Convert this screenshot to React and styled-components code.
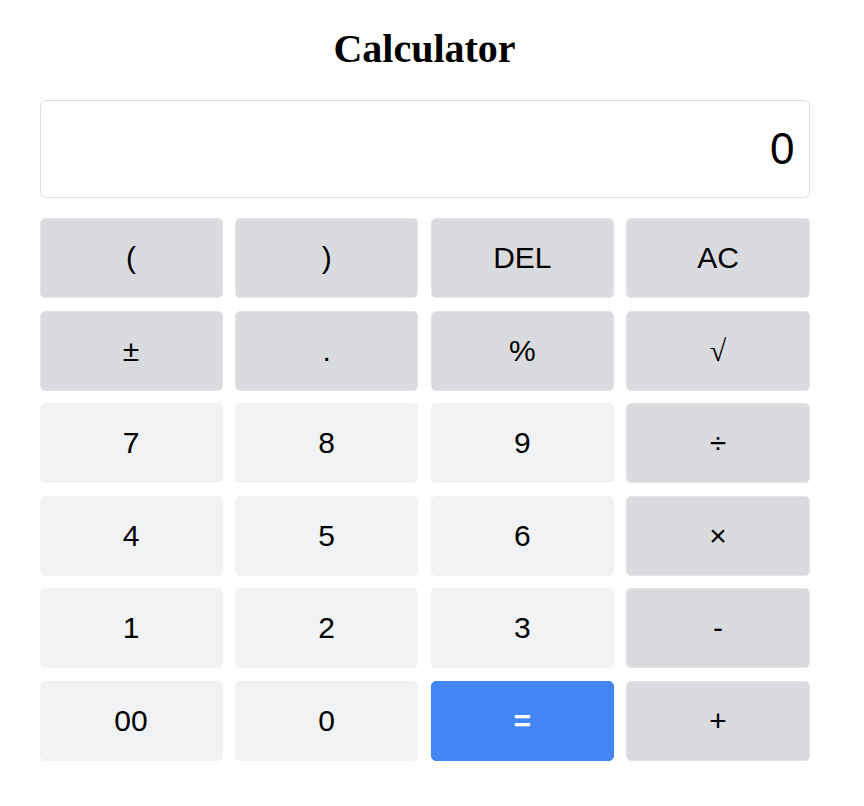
import React, { useState } from "react";
import styled, { createGlobalStyle } from "styled-components";

const GlobalStyle = createGlobalStyle`
  html, body { margin: 0; padding: 0; background: #ffffff; }
  body { font-family: "Liberation Sans", Arial, sans-serif; color: #000; }
  * { box-sizing: border-box; }
`;

const Page = styled.div`
  padding: 27px 15px 40px 0;
`;

const Calculator = styled.div`
  max-width: 770px;
  margin: 0 auto;
  display: flex;
  flex-direction: column;
`;

const Title = styled.h1`
  margin: 0 0 29px;
  font-family: "Liberation Serif", "Times New Roman", serif;
  font-weight: 700;
  font-size: 40px;
  line-height: 44px;
  text-align: center;
`;

const Display = styled.div`
  border: 1px solid #dcdfe3;
  border-radius: 6px;
  padding: 22px 14px 23px;
  font-size: 44px;
  line-height: 51px;
  text-align: right;
  background: #fff;
  margin-bottom: 20px;
`;

const Keypad = styled.div`
  display: grid;
  grid-template-columns: repeat(4, 1fr);
  gap: 12.6px;
`;

const palette = {
  fn: { bg: "#dadbdf", border: "#e3e4e7", color: "#000" },
  op: { bg: "#dadbdf", border: "#e3e4e7", color: "#000" },
  num: { bg: "#f1f2f4", border: "#f1f2f4", color: "#000" },
  eq: { bg: "#4285f4", border: "#4285f4", color: "#fff" },
};

const Key = styled.button`
  height: 80px;
  border-radius: 5px;
  border: 1px solid ${(p) => palette[p.$kind].border};
  background: ${(p) => palette[p.$kind].bg};
  color: ${(p) => palette[p.$kind].color};
  font-family: ${(p) =>
    p.$serif
      ? '"Liberation Serif", "Times New Roman", serif'
      : '"Liberation Sans", Arial, sans-serif'};
  font-size: 30px;
  font-weight: ${(p) => (p.$kind === "eq" ? 700 : 400)};
  display: flex;
  align-items: center;
  justify-content: center;
  padding: 0;
  cursor: pointer;
`;

const keys = [
  ["(", "fn"], [")", "fn"], ["DEL", "fn"], ["AC", "fn"],
  ["±", "fn"], [".", "fn"], ["%", "fn"], ["√", "fn", true],
  ["7", "num"], ["8", "num"], ["9", "num"], ["÷", "op"],
  ["4", "num"], ["5", "num"], ["6", "num"], ["×", "op"],
  ["1", "num"], ["2", "num"], ["3", "num"], ["-", "op"],
  ["00", "num"], ["0", "num"], ["=", "eq"], ["+", "op"],
];

export default function App() {
  const [value] = useState("0");
  return (
    <>
      <GlobalStyle />
      <Page>
        <Calculator>
          <Title>Calculator</Title>
          <Display>{value}</Display>
          <Keypad>
            {keys.map(([label, kind, serif]) => (
              <Key key={label} $kind={kind} $serif={serif}>
                {label}
              </Key>
            ))}
          </Keypad>
        </Calculator>
      </Page>
    </>
  );
}
